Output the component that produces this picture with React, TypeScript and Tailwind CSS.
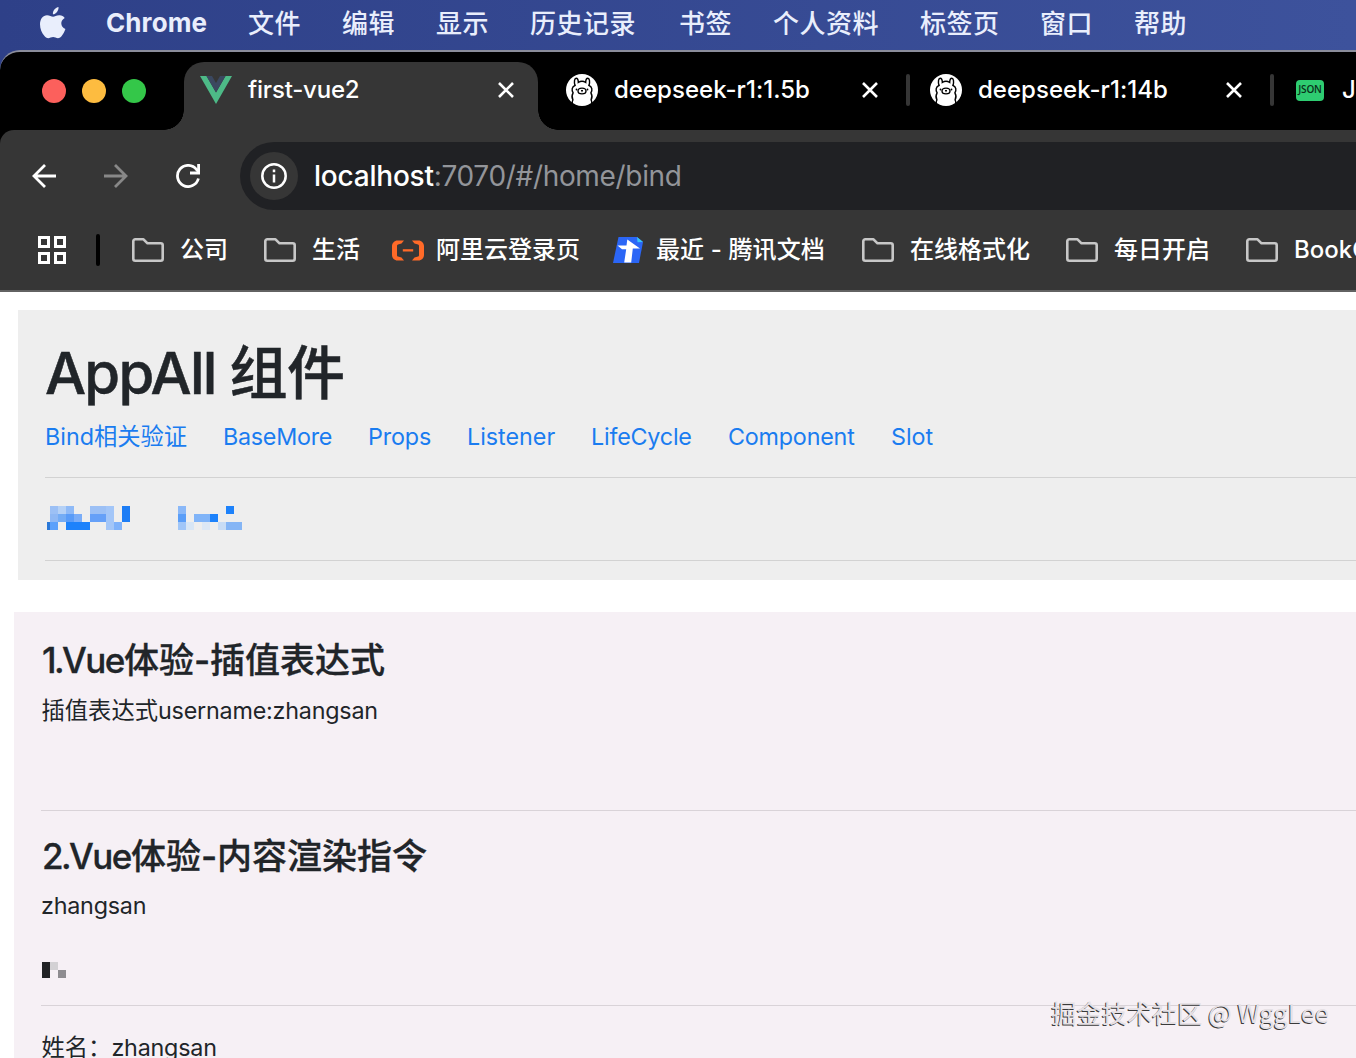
import { ReactNode } from "react";

const menuItems = [
  { label: "文件", width: "w-[94px]" },
  { label: "编辑", width: "w-[94px]" },
  { label: "显示", width: "w-[94px]" },
  { label: "历史记录", width: "w-[149px]" },
  { label: "书签", width: "w-[94px]" },
  { label: "个人资料", width: "w-[147px]" },
  { label: "标签页", width: "w-[120px]" },
  { label: "窗口", width: "w-[94px]" },
  { label: "帮助", width: "w-[94px]" },
];

const links = [
  { label: "Bind相关验证", style: "w-[178px]" },
  { label: "BaseMore", style: "w-[145px] tracking-[-0.250px]" },
  { label: "Props", style: "w-[99px] tracking-[-0.150px]" },
  { label: "Listener", style: "w-[124px]" },
  { label: "LifeCycle", style: "w-[137px] tracking-[-0.200px]" },
  { label: "Component", style: "w-[163px] tracking-[-0.200px]" },
  { label: "Slot", style: "w-[60px]" },
];

// [x, y, fill], every cell is 8px
const navMosaic: [number, number, string][] = [
  [4, 0, "#9cc0f5"], [12, 0, "#b5d1f6"], [20, 0, "#8fbaf7"],
  [44, 0, "#9cc0f5"], [52, 0, "#9cc0f5"], [60, 0, "#a3c6f8"], [76, 0, "#1d7df5"],
  [4, 8, "#8fb8f4"], [12, 8, "#74acf5"], [20, 8, "#5a9cf8"], [28, 8, "#7aadf8"],
  [44, 8, "#65a0f8"], [52, 8, "#65a0f8"], [60, 8, "#a3c6f8"], [76, 8, "#1d7df5"],
  [4, 16, "#5ba0fb"], [20, 16, "#1d82fb"], [28, 16, "#1d82fb"], [36, 16, "#1d82fb"],
  [60, 16, "#a3c6f8"], [68, 16, "#7fb2fa"],
  [132, 0, "#8ab8f8"], [180, 0, "#1d82fb"],
  [132, 8, "#5a9ef8"], [148, 8, "#80b4f8"], [156, 8, "#80b4f8"], [164, 8, "#1d82fb"],
  [132, 16, "#a0c6f8"], [140, 16, "#d8e6f5"], [156, 16, "#dde8f5"],
  [172, 16, "#c8dcf5"], [180, 16, "#85b5f5"], [188, 16, "#85b5f5"],
];

const AppleIcon = () => (
  <svg className="h-8 w-[26px]" viewBox="0 0 26 32" fill="#e9eefc">
    <path d="M18.500 0c.2 2-.5 3.800-1.700 5.200-1.200 1.400-2.500 2.100-3.900 2-.2-1.900.6-3.600 1.700-4.900C15.700 1 17.300.2 18.500 0z" />
    <path d="M24.700 11.100c-2.400 1.400-3.500 3.300-3.400 5.500.1 2.600 1.500 4.400 4.100 5.500-.9 2.800-2.300 5.300-4.100 7.400-2 2.200-3.900 1.900-5.800 1-1.700-.7-3.200-.7-4.900.1-2.200 1-3.900.9-5.700-1.100C1.600 25.900 0 21.800 0 17.300c0-5.500 3-8.900 7-9.100 2.600 0 4.300 1.500 6.100 1.500 1.700 0 3.500-1.600 6.600-1.400 2.100.1 3.800 1 5 2.800z" />
  </svg>
);

const VueIcon = () => (
  <svg className="h-7 w-8 shrink-0" viewBox="0 0 32 28">
    <path d="M0 0h6.500L16 16.500 25.500 0H32L16 28z" fill="#4dba87" />
    <path d="M6.500 0H12l4 7 4-7h5.500L16 16.500z" fill="#3b4860" />
  </svg>
);

const OllamaIcon = () => (
  <svg className="h-8 w-8 shrink-0" viewBox="0 0 32 32" fill="none" stroke="#000" strokeWidth="1.400" strokeLinecap="round">
    <circle cx="16" cy="16" r="16" fill="#fff" stroke="none" />
    <path d="M9 11.500C7.800 7.500 8.600 4.300 10.100 4.300c1.400 0 2.200 2 2.200 4.200 2.300-1.500 5.100-1.500 7.400 0 0-2.200.8-4.200 2.200-4.200 1.500 0 2.300 3.200 1.100 7.200" />
    <path d="M9 11.300c-3.200 1.500-3.600 4.900-1.900 7.500-1.500 2.500-1.500 4.700-.2 7-.8 1.400-.8 2.500-.6 3.700" />
    <path d="M23 11.300c3.200 1.500 3.600 4.900 1.900 7.500 1.500 2.500 1.500 4.700.2 7 .8 1.400.8 2.500.6 3.700" />
    <ellipse cx="16" cy="17" rx="4" ry="2.900" />
    <path d="M15.300 16.300l.7.500.7-.5M16 16.800v1" strokeWidth="1" />
    <circle cx="10.500" cy="15.500" r="0.900" fill="#000" stroke="none" />
    <circle cx="21.500" cy="15.500" r="0.900" fill="#000" stroke="none" />
  </svg>
);

const CloseIcon = () => (
  <svg className="h-4 w-4 shrink-0" viewBox="0 0 16 16" stroke="#fff" strokeWidth="2.600">
    <path d="M1 1l14 14M15 1L1 15" />
  </svg>
);

const FolderIcon = () => (
  <svg className="h-6 w-8 shrink-0" viewBox="0 0 32 24" fill="none" stroke="#c7c7c7" strokeWidth="2.600" strokeLinejoin="round">
    <path d="M1.300 3.300a2 2 0 0 1 2-2h8.200l4 4h13.200a2 2 0 0 1 2 2v13.400a2 2 0 0 1-2 2H3.300a2 2 0 0 1-2-2z" />
  </svg>
);

const AliyunIcon = () => (
  <svg className="h-[21px] w-8 shrink-0" viewBox="0 0 32 21" fill="#ff6a28">
    <path d="M12 .5H5.500C2.500.5 0 3 0 6v9c0 3 2.500 5.500 5.500 5.500H12L9.500 17.500 6 16.600c-.6-.2-1-.7-1-1.400V5.800c0-.7.4-1.200 1-1.400l3.500-.9z" />
    <path d="M20 .5h6.500C29.500.5 32 3 32 6v9c0 3-2.500 5.500-5.500 5.500H20l2.500-3 3.500-.9c.6-.2 1-.7 1-1.400V5.800c0-.7-.4-1.200-1-1.400l-3.500-.9z" />
    <path d="M10.800 9.200h10.400v2.300H10.800z" />
  </svg>
);

const TencentDocsIcon = () => (
  <svg className="h-[26px] w-[30px] shrink-0" viewBox="0 0 30 26">
    <path d="M5.500 0H24l6 5-4 21H0z" fill="#2b66f6" />
    <path d="M24 0l6 5-5.500.2z" fill="#39c5f7" />
    <path d="M4.500 8.500h9l.8-6L27 11.600h-7.200l-1.600 13.900h-7l2-13.200H9z" fill="#fff" />
  </svg>
);

const Tab = ({ title, children }: { title: string; children: ReactNode }) => (
  <div className="flex h-14 w-[364px] shrink-0 items-center pr-[52px]">
    {children}
    <span className="ml-4 flex-1 tracking-[0.030px] text-white">{title}</span>
    <CloseIcon />
  </div>
);

const MenuBar = () => (
  <div className="flex h-[50px] items-center bg-linear-to-r from-[#2e4088] to-[#3d529c] pb-1 pl-10 text-[26px] font-medium text-[#e9eefc]">
    <AppleIcon />
    <span className="ml-10 w-[142px] pb-0.5 text-[26px] font-bold tracking-[0.100px]">Chrome</span>
    {menuItems.map((item) => (
      <span key={item.label} className={`${item.width} shrink-0 tracking-[0.500px]`}>
        {item.label}
      </span>
    ))}
  </div>
);

const TabStrip = () => (
  <div className="flex h-[78px] pl-[42px] text-2xl font-medium">
    <div className="flex w-[142px] shrink-0 items-center gap-4">
      <span className="h-6 w-6 rounded-full bg-[#fc605c]" />
      <span className="h-6 w-6 rounded-full bg-[#fdbc40]" />
      <span className="h-6 w-6 rounded-full bg-[#34c749]" />
    </div>
    <div className="relative mt-[10px] flex h-[68px] w-[354px] shrink-0 items-start rounded-t-[20px] bg-[#363636] pl-4">
      <span className="absolute bottom-0 -left-5 h-5 w-5 bg-[radial-gradient(circle_at_0_0,#000_19.500px,#363636_20px)]" />
      <span className="absolute -right-5 bottom-0 h-5 w-5 bg-[radial-gradient(circle_at_100%_0,#000_19.500px,#363636_20px)]" />
      <div className="flex h-14 w-[314px] items-center">
        <VueIcon />
        <span className="ml-4 flex-1 tracking-[-0.200px] text-white">first-vue2</span>
        <CloseIcon />
      </div>
    </div>
    <div className="mt-[10px] flex h-14 items-center pl-7">
      <Tab title="deepseek-r1:1.5b"><OllamaIcon /></Tab>
      <span className="-ml-6 mr-5 h-8 w-1 shrink-0 rounded-sm bg-[#363636]" />
      <Tab title="deepseek-r1:14b"><OllamaIcon /></Tab>
      <span className="-ml-6 mr-[22px] h-8 w-1 shrink-0 rounded-sm bg-[#363636]" />
      <span className="flex h-[21px] w-7 shrink-0 items-center justify-center rounded bg-[#2ecc71] font-['Open_Sans'] text-[10px] font-semibold tracking-[-0.200px] text-[#0a2f1a]">JSON</span>
      <span className="ml-[18px] text-white">J</span>
    </div>
  </div>
);

const AddressBar = () => (
  <div className="flex h-[92px] items-center pl-8">
    <svg className="h-6 w-6 shrink-0" viewBox="0 0 24 24" fill="none" stroke="#fff" strokeWidth="2.800">
      <path d="M13 1L2 12l11 11M2 12h22" />
    </svg>
    <svg className="ml-12 h-6 w-6 shrink-0" viewBox="0 0 24 24" fill="none" stroke="#888" strokeWidth="2.800">
      <path d="M11 1l11 11-11 11M22 12H0" />
    </svg>
    <svg className="ml-12 h-6 w-6 shrink-0" viewBox="0 0 24 24" fill="none" stroke="#fff" strokeWidth="2.800">
      <path d="M22.400 14.500A10.600 10.600 0 1 1 20.500 5.500L23.500 8.600" />
      <path d="M22.600 0v9H14" />
    </svg>
    <div className="ml-10 flex h-[68px] flex-1 items-center rounded-l-full bg-[#202124] pl-[10px]">
      <span className="flex h-12 w-12 items-center justify-center rounded-full bg-[#363636]">
        <svg className="h-[26px] w-[26px]" viewBox="0 0 26 26" fill="none" stroke="#fff" strokeWidth="2.500">
          <circle cx="13" cy="13" r="11.700" />
          <path d="M13 11.500v8M13 6.500v2.700" />
        </svg>
      </span>
      <span className="ml-4 text-[28px] tracking-[-0.330px] text-[#93959a]">
        <span className="font-medium tracking-[-0.220px] text-white">localhost</span>:7070/#/home/bind
      </span>
    </div>
  </div>
);

const Bookmark = ({ label, width, children }: { label: string; width: string; children: ReactNode }) => (
  <div className={`flex shrink-0 items-center ${width}`}>
    {children}
    <span className="whitespace-nowrap">{label}</span>
  </div>
);

const BookmarkBar = () => (
  <div className="flex h-[70px] items-start overflow-hidden border-b-2 border-[#626262] pt-[10px] pl-[38px] text-2xl font-medium text-white">
    <div className="flex h-[36px] items-center">
      <svg className="h-7 w-7 shrink-0" viewBox="0 0 28 28" fill="none" stroke="#fff" strokeWidth="3">
        <path d="M1.500 1.500h9v9h-9zM17.500 1.500h9v9h-9zM1.500 17.500h9v9h-9zM17.500 17.500h9v9h-9z" />
      </svg>
      <span className="mr-8 ml-[30px] h-8 w-1 shrink-0 rounded-sm bg-black" />
      <Bookmark label="公司" width="w-[132px] gap-4"><FolderIcon /></Bookmark>
      <Bookmark label="生活" width="w-[128px] gap-4"><FolderIcon /></Bookmark>
      <Bookmark label="阿里云登录页" width="w-[221px] gap-3"><AliyunIcon /></Bookmark>
      <Bookmark label="最近 - 腾讯文档" width="w-[249px] gap-[13px] tracking-[0.120px]"><TencentDocsIcon /></Bookmark>
      <Bookmark label="在线格式化" width="w-[204px] gap-4"><FolderIcon /></Bookmark>
      <Bookmark label="每日开启" width="w-[180px] gap-4"><FolderIcon /></Bookmark>
      <Bookmark label="BookOS" width="w-[180px] gap-4"><FolderIcon /></Bookmark>
    </div>
  </div>
);

const AppAll = () => (
  <section className="mt-[18px] ml-[18px] h-[270px] bg-[#eee] pt-[27px] pl-[27px]">
    <h1 className="h-[72px] text-[58px] leading-[72px] font-medium [-webkit-text-stroke:0.500px]">
      <span className="tracking-[-1.750px]">AppAll </span>
      <span className="tracking-[-0.500px]">组件</span>
    </h1>
    <nav className="mt-[10px] flex h-9 items-center text-[23.300px] text-[#1a7cf0]">
      {links.map((link) => (
        <a key={link.label} href="#" className={`${link.style} shrink-0 whitespace-nowrap`}>
          {link.label}
        </a>
      ))}
    </nav>
    <hr className="mt-[22px] border-[#d2d2d2]" />
    <svg className="mt-7 h-6 w-[200px]" viewBox="-1 0 200 24" shapeRendering="crispEdges">
      <path d="M1 16h3v8H1z" fill="#2a78d8" />
      {navMosaic.map(([x, y, fill]) => (
        <rect key={`${x}-${y}`} x={x} y={y} width="8" height="8" fill={fill} />
      ))}
    </svg>
    <hr className="mt-[30px] border-[#d2d2d2]" />
  </section>
);

const SectionTitle = ({ index, text }: { index: number; text: string }) => (
  <h3 className="h-10 pl-px text-[35px] leading-10 font-medium [-webkit-text-stroke:0.300px]">
    <span className="tracking-[-2.600px]">{index}.</span>
    <span className="tracking-[-1.500px]">Vue</span>
    <span>{text}</span>
  </h3>
);

const BindDemo = () => (
  <section className="mt-8 ml-[14px] h-[446px] overflow-hidden bg-[#f6f0f5] pt-7 pl-[27px] text-[23.300px]">
    <SectionTitle index={1} text="体验-插值表达式" />
    <p className="mt-[13px] h-9 pl-[0.5px] leading-9">
      插值表达式<span className="tracking-[-0.200px]">username:zhangsan</span>
    </p>
    <hr className="mt-[81px] border-[#d9d3d8]" />
    <div className="mt-[25px]">
      <SectionTitle index={2} text="体验-内容渲染指令" />
    </div>
    <p className="mt-3 h-9 leading-9 tracking-[-0.200px]">zhangsan</p>
    <svg className="mt-[38px] ml-px h-4 w-6" viewBox="0 0 24 16" shapeRendering="crispEdges">
      <path d="M0 0h8v16H0z" fill="#222326" />
      <path d="M8 0h8v8H8z" fill="#d3d1d4" />
      <path d="M16 8h8v8h-8z" fill="#8e8c90" />
    </svg>
    <hr className="mt-[27px] border-[#d9d3d8]" />
    <p className="mt-6 h-9 pl-[0.5px] leading-9">
      姓名：<span className="tracking-[-0.200px]">zhangsan</span>
    </p>
  </section>
);

export default function App() {
  return (
    <div className="relative h-[1058px] w-[1356px] overflow-hidden bg-white font-['Inter','Noto_Sans_CJK_SC',sans-serif] text-[#212529]">
      <div className="bg-linear-to-r from-[#2e4088] to-[#3d529c]">
        <MenuBar />
        <header className="h-[242px] w-[1400px] rounded-tl-[20px] border-t-2 border-[#8b8d9b] bg-black">
          <TabStrip />
          <div className="rounded-tl-[14px] bg-[#363636]">
            <AddressBar />
            <BookmarkBar />
          </div>
        </header>
      </div>
      <AppAll />
      <BindDemo />
      <div className="absolute right-[27px] bottom-[28px] font-['Noto_Sans_CJK_SC',sans-serif] text-[25.200px] leading-9 font-normal text-[#e6e1e5] [text-shadow:-1px_1px_0_#3a3a3a]">
        掘金技术社区 @ WggLee
      </div>
    </div>
  );
}
